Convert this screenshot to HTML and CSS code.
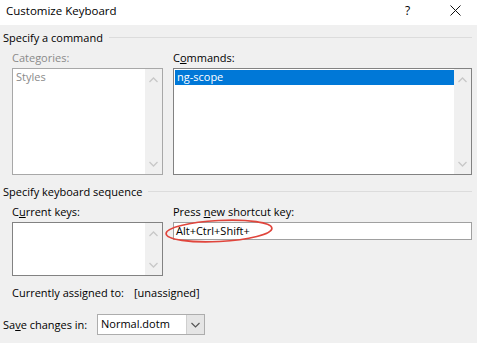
FILE: index.html
```html
<!DOCTYPE html>
<html>
<head>
<meta charset="utf-8">
<link rel="stylesheet" href="styles.css">
</head>
<body>
<div class="dialog">
  <div class="titlebar">
    <span class="title">Customize Keyboard</span>
    <span class="help">?</span>
    <svg class="close" width="11" height="11" viewBox="0 0 11 11"><path d="M0.5 0.5 L10.5 10.5 M10.5 0.5 L0.5 10.5" stroke="#111" stroke-width="1"/></svg>
  </div>
  <div class="content">
    <div class="group-head"><span>Specify a command</span><span class="rule"></span></div>
    <div class="cols">
      <div class="col left">
        <div class="label disabled">Categories:</div>
        <div class="listbox tall disabled-box">
          <div class="items"><div class="item gray">Styles</div></div>
          <div class="scroll">
            <svg class="arrow" width="9" height="6" viewBox="0 0 9 6"><path d="M0.5 5 L4.5 1 L8.5 5" fill="none" stroke="#c8c8c8" stroke-width="1.3"/></svg>
            <svg class="arrow" width="9" height="6" viewBox="0 0 9 6"><path d="M0.5 1 L4.5 5 L8.5 1" fill="none" stroke="#c8c8c8" stroke-width="1.3"/></svg>
          </div>
        </div>
      </div>
      <div class="col right">
        <div class="label">C<u>o</u>mmands:</div>
        <div class="listbox tall">
          <div class="items"><div class="item selected">ng-scope</div></div>
          <div class="scroll">
            <svg class="arrow" width="9" height="6" viewBox="0 0 9 6"><path d="M0.5 5 L4.5 1 L8.5 5" fill="none" stroke="#c8c8c8" stroke-width="1.3"/></svg>
            <svg class="arrow" width="9" height="6" viewBox="0 0 9 6"><path d="M0.5 1 L4.5 5 L8.5 1" fill="none" stroke="#c8c8c8" stroke-width="1.3"/></svg>
          </div>
        </div>
      </div>
    </div>
    <div class="group-head second"><span>Specify keyboard sequence</span><span class="rule"></span></div>
    <div class="cols">
      <div class="col left">
        <div class="label">C<u>u</u>rrent keys:</div>
        <div class="listbox short">
          <div class="items"></div>
          <div class="scroll">
            <svg class="arrow" width="9" height="6" viewBox="0 0 9 6"><path d="M0.5 5 L4.5 1 L8.5 5" fill="none" stroke="#c8c8c8" stroke-width="1.3"/></svg>
            <svg class="arrow" width="9" height="6" viewBox="0 0 9 6"><path d="M0.5 1 L4.5 5 L8.5 1" fill="none" stroke="#c8c8c8" stroke-width="1.3"/></svg>
          </div>
        </div>
      </div>
      <div class="col right">
        <div class="label">Press <u>n</u>ew shortcut key:</div>
        <div class="input-wrap">
          <div class="input">Alt+Ctrl+Shift+</div>
          <svg class="circle" width="114" height="28" viewBox="0 0 114 28"><ellipse cx="57" cy="14" rx="53" ry="10.5" transform="rotate(-3 57 14)" fill="none" stroke="#e0453c" stroke-width="1.6"/></svg>
        </div>
      </div>
    </div>
    <div class="assigned"><span class="assigned-label">Currently assigned to:</span><span>[unassigned]</span></div>
    <div class="save-row">
      <span class="save-label">Sa<u>v</u>e changes in:</span>
      <div class="select">
        <span class="select-text">Normal.dotm</span>
        <span class="select-btn"><svg width="9" height="6" viewBox="0 0 9 6"><path d="M0.5 1 L4.5 5 L8.5 1" fill="none" stroke="#555" stroke-width="1.2"/></svg></span>
      </div>
    </div>
  </div>
</div>
</body>
</html>
```
FILE: styles.css
```css
html, body {
  margin: 0;
  padding: 0;
}
body {
  width: 477px;
  height: 343px;
  overflow: hidden;
  font-family: "Open Sans", "Noto Sans", "Liberation Sans", sans-serif;
  font-size: 11px;
  color: #000;
  background: #f0f0f0;
}
.dialog {
  width: 477px;
  height: 343px;
  display: flex;
  flex-direction: column;
}
.titlebar {
  height: 25px;
  background: #fff;
  display: flex;
  align-items: center;
  padding-left: 6px;
  box-sizing: border-box;
}
.title {
  font-size: 11.5px;
  flex: 1;
  padding-bottom: 4px;
}
.help {
  font-size: 12px;
  width: 14px;
  margin-right: 31px;
  padding-bottom: 4px;
}
.close {
  margin-right: 16px;
  margin-bottom: 4px;
}
.content {
  flex: 1;
  padding: 5px 5px 0 3px;
}
.group-head {
  display: flex;
  align-items: center;
  height: 16px;
  line-height: 16px;
}
.group-head .rule {
  flex: 1;
  border-top: 1px solid #dcdcdc;
  margin-left: 6px;
  margin-top: -2px;
}
.group-head.second {
  margin-top: 9px;
}
.cols {
  display: flex;
  padding-left: 9px;
  gap: 10px;
  margin-top: 4px;
}
.col.left {
  width: 151px;
}
.col.right {
  width: 299px;
}
.label {
  height: 16px;
  line-height: 16px;
  margin-bottom: 2px;
}
.label.disabled {
  color: #8a8a8a;
}
.listbox {
  display: flex;
  background: #fff;
  border: 1px solid #828282;
  box-sizing: border-box;
}
.listbox.disabled-box {
  border-color: #a8a8a8;
}
.listbox.tall {
  height: 107px;
}
.listbox.short {
  height: 54px;
}
.items {
  flex: 1;
  padding: 1px 0 0 1px;
}
.item {
  height: 15px;
  line-height: 14px;
  padding-left: 2px;
}
.item.gray {
  color: #8a8a8a;
}
.item.selected {
  background: #0078d7;
  color: #fff;
}
.scroll {
  width: 17px;
  background: #f0f0f0;
  display: flex;
  flex-direction: column;
  justify-content: space-between;
  align-items: center;
  padding: 8px 0 7px;
}
.input-wrap {
  position: relative;
}
.input {
  height: 18px;
  line-height: 16px;
  background: #fff;
  border: 1px solid #a0a0a0;
  box-sizing: border-box;
  padding-left: 2px;
}
.circle {
  position: absolute;
  left: -11px;
  top: -5px;
}
.assigned {
  padding-left: 9px;
  margin-top: 9px;
  height: 16px;
  line-height: 16px;
  display: flex;
}
.assigned-label {
  width: 122px;
}
.save-row {
  display: flex;
  align-items: center;
  margin-top: 13px;
}
.save-label {
  width: 94px;
}
.select {
  width: 108px;
  height: 21px;
  box-sizing: border-box;
  border: 1px solid #adadad;
  background: #fff;
  display: flex;
}
.select-text {
  flex: 1;
  line-height: 18px;
  padding-left: 3px;
}
.select-btn {
  width: 17px;
  background: #e5e5e5;
  border-left: 1px solid #cfcfcf;
  display: flex;
  align-items: center;
  justify-content: center;
}
```
